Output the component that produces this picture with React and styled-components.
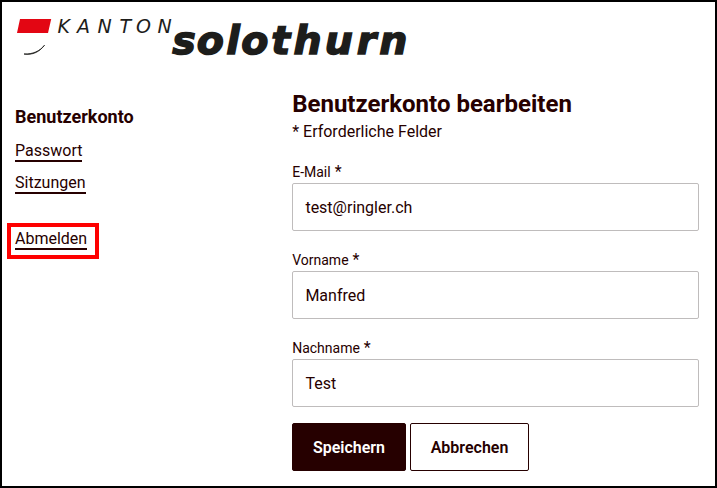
import React from "react";
import styled, { createGlobalStyle } from "styled-components";

const ink = "#260000";

const GlobalStyle = createGlobalStyle`
  *, *::before, *::after { box-sizing: border-box; }
  body { margin: 0; background: #fff; }
`;

const Page = styled.div`
  width: 717px;
  height: 488px;
  border: 2px solid #000;
  background: #fff;
  color: ${ink};
  font-family: Roboto, sans-serif;
  font-size: 16px;
  line-height: 19px;
  overflow: hidden;
`;

const Header = styled.header`
  height: 70px;
  padding: 4px 0 0 12px;
`;

const Logo = styled.svg`
  display: block;
  overflow: visible;
`;

const LogoText = styled.text`
  font-family: "DejaVu Sans", sans-serif;
  font-style: italic;
  font-weight: ${(p) => (p.$heavy ? 700 : 400)};
  font-size: ${(p) => (p.$heavy ? "39.5px" : "19px")};
  fill: #1d1d1b;
  stroke: #1d1d1b;
  stroke-width: ${(p) => (p.$heavy ? "1.5px" : "0")};
`;

const Columns = styled.div`
  display: grid;
  grid-template-columns: 277px 407px;
  padding-left: 13px;
`;

const Sidebar = styled.nav`
  display: flex;
  flex-direction: column;
  align-items: flex-start;
  padding-top: 34px;
`;

const SidebarTitle = styled.h2`
  margin: 0 0 13px;
  font-size: 18px;
  line-height: 22px;
  font-weight: 700;
`;

const NavLink = styled.a`
  display: block;
  height: 21px;
  margin-bottom: 11px;
  border-bottom: 2px solid ${ink};
  color: ${ink};
  text-decoration: none;
`;

const Highlight = styled.div`
  width: 92px;
  height: 36px;
  margin: 18px 0 0 -8px;
  padding: 2px 0 0 4px;
  border: 4px solid #fe0000;
  display: flex;
  align-items: flex-start;
`;

const Form = styled.form`
  display: flex;
  flex-direction: column;
  padding-top: 17px;
`;

const Title = styled.h1`
  margin: 0;
  padding-left: 0.2px;
  font-size: 24px;
  line-height: 30px;
  font-weight: 700;
`;

const Hint = styled.p`
  margin: 3px 0 18px;
  padding-left: 0.2px;
`;

const Field = styled.label`
  display: block;
  margin-bottom: 16px;
`;

const FieldName = styled.span`
  display: block;
  height: 24px;
  padding: 3px 0 0 0.2px;
  font-size: 14px;
  line-height: 19px;
`;

const Star = styled.span`
  font-size: 16px;
`;

const Input = styled.input`
  display: block;
  width: 100%;
  height: 48px;
  padding: 0 12px 0 12.4px;
  border: 1px solid #bfbcbc;
  border-radius: 2px;
  outline: none;
  background: #fff;
  color: ${ink};
  font: inherit;
`;

const Actions = styled.div`
  display: flex;
  gap: 4px;
`;

const Button = styled.button`
  width: ${(p) => (p.$primary ? "114px" : "119px")};
  height: 48px;
  padding: 0;
  border: 1px solid ${ink};
  border-radius: 2px;
  background: ${(p) => (p.$primary ? ink : "#fff")};
  color: ${(p) => (p.$primary ? "#fff" : ink)};
  font: 600 16px/19px Roboto, sans-serif;
`;

const fields = [
  { name: "E-Mail", value: "test@ringler.ch" },
  { name: "Vorname", value: "Manfred" },
  { name: "Nachname", value: "Test" },
];

export default function App() {
  return (
    <>
      <GlobalStyle />
      <Page>
        <Header>
          <Logo width="420" height="60" viewBox="14 6 420 60" role="img" aria-label="Kanton Solothurn">
            <path d="M20 19H51.2L48 33H17Z" fill="#e30613" />
            <path d="M24 54C32 55.2 39 52.5 44.5 45.2C40 51 33 54.3 24 54Z" fill="#1d1d1b" stroke="#1d1d1b" strokeWidth="0.8" />
            <LogoText x="57.6 77 97.4 119.6 136 157.4" y="33">KANTON</LogoText>
            <LogoText $heavy x="172.3 196.8 226.2 241.3 271.3 293.5 324.8 356.8 379.3" y="54">solothurn</LogoText>
          </Logo>
        </Header>
        <Columns>
          <Sidebar>
            <SidebarTitle>Benutzerkonto</SidebarTitle>
            <NavLink>Passwort</NavLink>
            <NavLink>Sitzungen</NavLink>
            <Highlight>
              <NavLink>Abmelden</NavLink>
            </Highlight>
          </Sidebar>
          <Form>
            <Title>Benutzerkonto bearbeiten</Title>
            <Hint>* Erforderliche Felder</Hint>
            {fields.map((f) => (
              <Field key={f.name}>
                <FieldName>
                  {f.name}
                  <Star> *</Star>
                </FieldName>
                <Input defaultValue={f.value} />
              </Field>
            ))}
            <Actions>
              <Button type="button" $primary>Speichern</Button>
              <Button type="button">Abbrechen</Button>
            </Actions>
          </Form>
        </Columns>
      </Page>
    </>
  );
}
